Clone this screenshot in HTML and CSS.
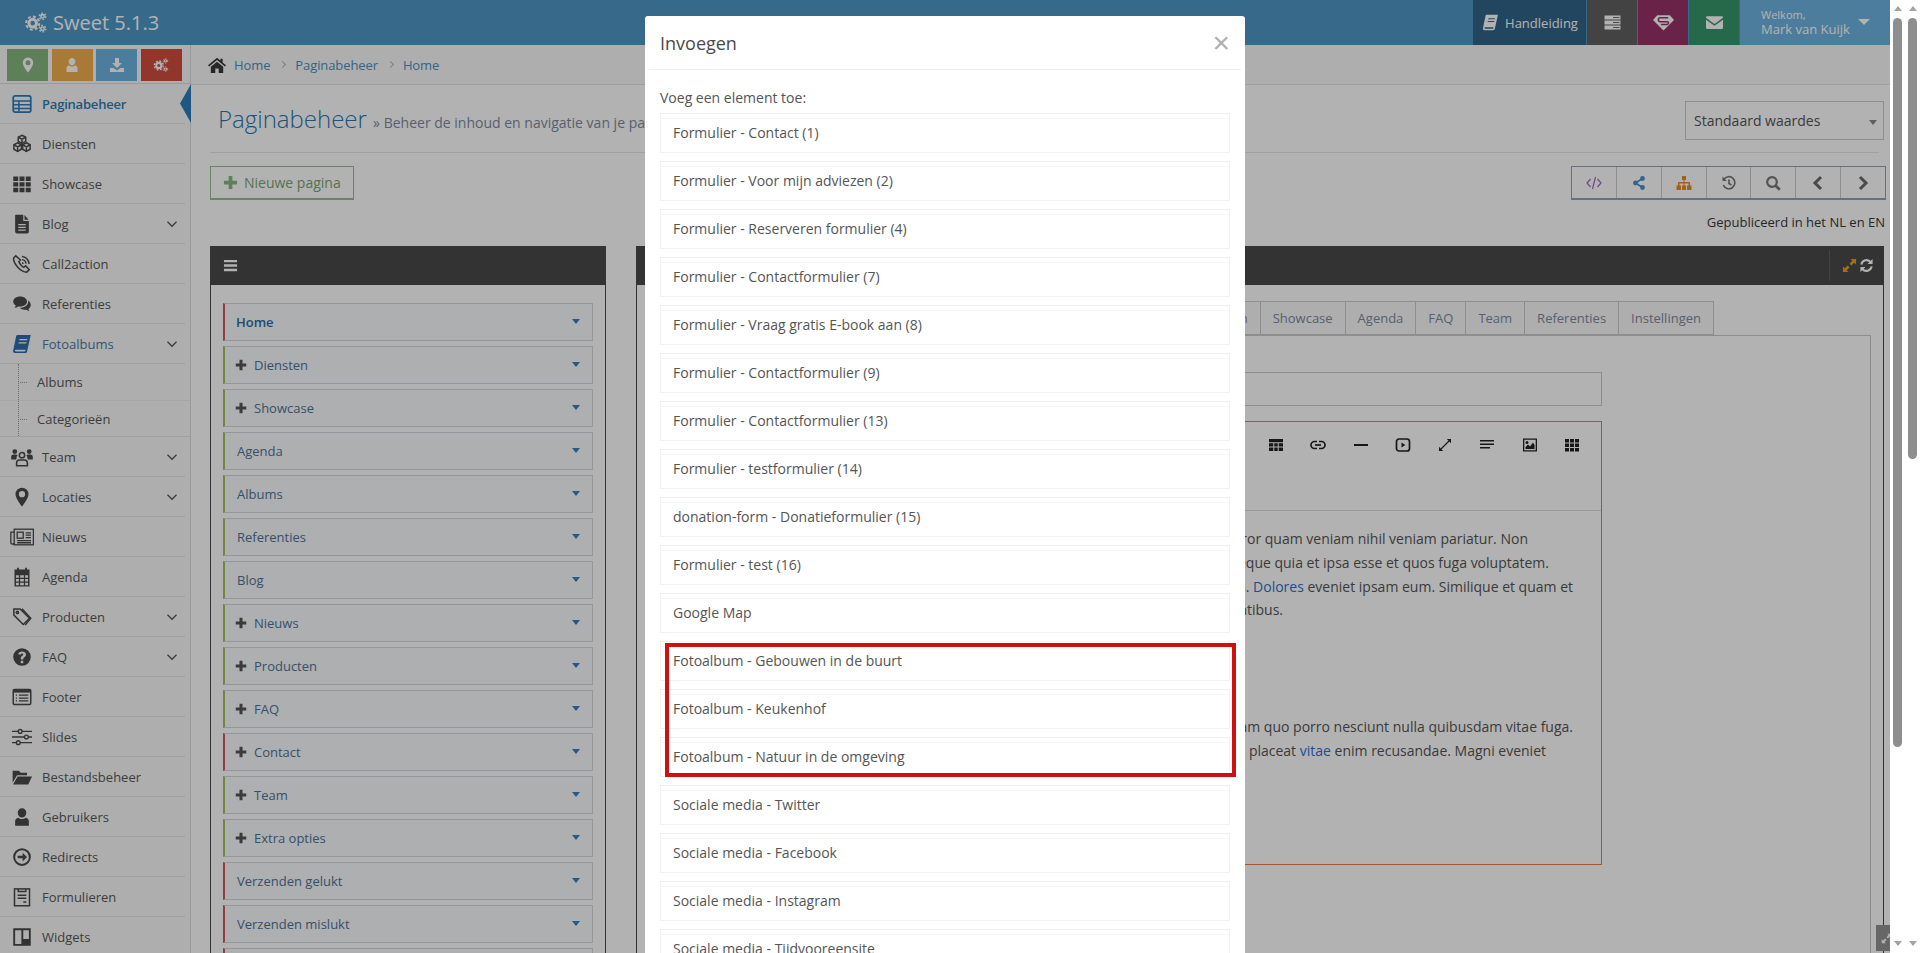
FILE: index.html
```html
<!DOCTYPE html>
<html lang="nl">
<head>
<meta charset="utf-8">
<title>Sweet 5.1.3</title>
<link rel="stylesheet" href="styles.css">
</head>
<body>
<svg class="defs" aria-hidden="true">
  <symbol id="i-gears" viewBox="0 0 18 16"><g fill="none" stroke="currentColor"><circle cx="6.500" cy="8.500" r="2.900" stroke-width="2.300"/><circle cx="6.500" cy="8.500" r="5" stroke-width="1.500" stroke-dasharray="2.200 1.730"/><circle cx="14" cy="3.300" r="1.300" stroke-width="1.200"/><circle cx="14" cy="3.300" r="2.500" stroke-width="1" stroke-dasharray="1.300 1.320"/><circle cx="14" cy="12.700" r="1.300" stroke-width="1.200"/><circle cx="14" cy="12.700" r="2.500" stroke-width="1" stroke-dasharray="1.300 1.320"/></g></symbol>
  <symbol id="i-marker" viewBox="0 0 16 16"><path fill="currentColor" fill-rule="evenodd" d="M8 .5a5.2 5.2 0 0 0-5.2 5.2C2.800 9.300 8 15.500 8 15.500s5.200-6.200 5.200-9.800A5.200 5.200 0 0 0 8 .5zm0 7.700a2.500 2.500 0 1 1 0-5 2.500 2.500 0 0 1 0 5z"/></symbol>
  <symbol id="i-user" viewBox="0 0 16 16"><path fill="currentColor" d="M8 1a3.400 3.400 0 0 1 3.400 3.800C11.300 6.700 9.900 8.400 8 8.400S4.700 6.700 4.600 4.800A3.400 3.400 0 0 1 8 1zM5 8.500c.8.700 1.900 1.100 3 1.100s2.200-.4 3-1.100c1.500.3 2.500 1.300 2.500 3V15h-11v-3.500c0-1.700 1-2.700 2.500-3z"/></symbol>
  <symbol id="i-download" viewBox="0 0 16 16"><path fill="currentColor" d="M6 1h4v5h3L8 11 3 6h3zM1 11h3.500L8 13.500 11.500 11H15v4H1z"/></symbol>
  <symbol id="i-table" viewBox="0 0 16 16"><rect x="1" y="1.500" width="14" height="13" rx="1.500" fill="none" stroke="currentColor" stroke-width="1.400"/><path stroke="currentColor" stroke-width="1.200" d="M1 5.500h14M1 8.500h14M1 11.500h14M5.500 5v9"/></symbol>
  <symbol id="i-cubes" viewBox="0 0 16 16"><g fill="none" stroke="currentColor" stroke-width="1.200"><path d="M8 1l3 1.600v3.300L8 7.500 5 5.900V2.600z"/><path d="M4.500 7L7.500 8.600v3.600L4.500 14 1.500 12.200V8.600z"/><path d="M11.500 7l3 1.600v3.600L11.500 14l-3-1.800V8.600z"/><path d="M5 2.600l3 1.600 3-1.600M1.500 8.600l3 1.700 3-1.700M8.500 8.600l3 1.700 3-1.700M8 4.200v3M4.500 10.300V14M11.500 10.300V14"/></g></symbol>
  <symbol id="i-th" viewBox="0 0 16 16"><path fill="currentColor" d="M1 2h4v3.500H1zm5 0h4v3.500H6zm5 0h4v3.500h-4zM1 6.500h4V10H1zm5 0h4V10H6zm5 0h4V10h-4zM1 11h4v3.500H1zm5 0h4v3.500H6zm5 0h4v3.500h-4z"/></symbol>
  <symbol id="i-file" viewBox="0 0 16 16"><path fill="currentColor" fill-rule="evenodd" d="M3 .5h6v5h4.500V14a1.500 1.500 0 0 1-1.500 1.500H4A1.500 1.500 0 0 1 2.500 14V1zM10 .7l3.300 3.800H10zM5 8v1h6V8zm0 2.200v1h6v-1zm0 2.200v1h6v-1z"/></symbol>
  <symbol id="i-phone" viewBox="0 0 16 16"><g fill="none" stroke="currentColor" stroke-width="1.200"><path d="M3 1.500L1.300 3.200c-.6 4 5.500 11.300 10.500 11.300l2-2-2.800-3-1.600 1.200C7.800 10 5.800 7.500 5.500 6L6.800 4.800z"/><path d="M8 2c3 .2 5.500 2.800 5.700 6M8 4.500c1.700.2 3 1.500 3.200 3.200M8 7c.5.100.8.400.9.900"/></g></symbol>
  <symbol id="i-comments" viewBox="0 0 16 16"><path fill="currentColor" d="M6.500 2C3.300 2 1 3.800 1 6c0 1.300.8 2.400 2 3.200-.2.700-.6 1.400-1 1.800 1.100-.1 2.200-.5 3-1.100.5.100 1 .1 1.500.1 3.200 0 5.500-1.800 5.500-4s-2.300-4-5.500-4zm6.300 3c.2.400.2.700.2 1 0 2.800-2.800 5-6.500 5h-.4C7 12 8.400 12.600 10 12.600c.4 0 .8 0 1.200-.1.800.6 1.800.9 2.800 1-.4-.4-.7-1-.9-1.600 1.100-.7 1.900-1.800 1.900-3 0-1.700-1-3-2.200-3.900z"/></symbol>
  <symbol id="i-book" viewBox="0 0 16 16"><path fill="currentColor" fill-rule="evenodd" d="M4.500.8H15l-.3 1.200-2.700 12.200c-.2.600-.7 1-1.300 1H2.300c-1 0-1.600-.9-1.400-1.800L3.300 1.800c.1-.6.600-1 1.200-1zM6 4l-.2 1h6.300l.2-1zm-.6 2.500l-.2 1h6.300l.2-1zM3 12.500c-.5 0-.7.300-.7.700s.3.700.7.700h7.500l.3-1.400z"/></symbol>
  <symbol id="i-team" viewBox="0 0 20 16"><path fill="currentColor" d="M4 1.500a2 2 0 1 1 0 4 2 2 0 0 1 0-4zm12 0a2 2 0 1 1 0 4 2 2 0 0 1 0-4zM1 10V7.800C1 6.800 1.900 6 3 6h2c.5 0 1 .2 1.300.5C5.700 7.200 5.400 8 5.500 9L5 10zm18 0V7.800C19 6.800 18.100 6 17 6h-2c-.5 0-1 .2-1.300.5.600.7.900 1.500.8 2.500l.5 1z"/><g fill="none" stroke="currentColor" stroke-width="1.300"><circle cx="10" cy="6.500" r="2.200"/><path d="M5.500 15.300v-2.300c0-1.500 1-2.500 2.500-2.500h4c1.500 0 2.500 1 2.500 2.500v2.300z"/></g></symbol>
  <symbol id="i-news" viewBox="0 0 20 16"><g fill="none" stroke="currentColor" stroke-width="1.100"><rect x="3.500" y="1.500" width="16" height="13"/><path d="M3.500 4H.7v9a1.500 1.500 0 0 0 2.800 0"/><rect x="6" y="4" width="5" height="5"/><path d="M13 4.500h4.500M13 6.500h4.500M13 8.500h4.500M6 11h11.500M6 12.800h11.500"/></g></symbol>
  <symbol id="i-calendar" viewBox="0 0 16 16"><path fill="currentColor" fill-rule="evenodd" d="M4 .5h1.500V2h5V.5H12V2h2v13.500H2V2h2zM3.200 6.500v2H5.500v-2zm3.300 0v2h3v-2zm4 0v2h2.300v-2zM3.200 9.500v2H5.500v-2zm3.300 0v2h3v-2zm4 0v2h2.300v-2zM3.200 12.500v2H5.500v-2zm3.300 0v2h3v-2zm4 0v2h2.300v-2z"/></symbol>
  <symbol id="i-tags" viewBox="0 0 16 16"><g fill="none" stroke="currentColor" stroke-width="1.200"><path d="M1.500 1.500h5L14 9l-5 5-7.500-7.500z"/><path d="M8 1.500l7 7.500-4.500 5.500"/><circle cx="4.300" cy="4.300" r=".9"/></g></symbol>
  <symbol id="i-question" viewBox="0 0 16 16"><path fill="currentColor" fill-rule="evenodd" d="M8 1a7 7 0 1 1 0 14A7 7 0 0 1 8 1zM7 11v2h2v-2zM8 3.500c-1.700 0-2.900.9-3 2.500h2c.1-.6.500-.9 1-.9s1 .3 1 .8c0 .4-.3.700-.8 1.100C7.300 7.600 7 8.200 7 10h2c0-1 .2-1.300 1-1.900.8-.6 1.200-1.300 1.200-2.100 0-1.500-1.400-2.500-3.200-2.500z"/></symbol>
  <symbol id="i-footer" viewBox="0 0 16 16"><rect x="1" y="2" width="14" height="12" rx="1" fill="none" stroke="currentColor" stroke-width="1.200"/><path fill="currentColor" d="M1 2h14v2.500H1z"/><path stroke="currentColor" stroke-width="1" d="M3 6.500h1M3 8.800h1M3 11h1M5.500 6.500H13M5.500 8.800H13M5.500 11H13"/></symbol>
  <symbol id="i-sliders" viewBox="0 0 16 16"><g fill="none" stroke="currentColor" stroke-width="1.100"><path d="M0 3.500h5M8 3.500h8M0 8h10M13 8h3M0 12.500h3.500M6.500 12.500H16"/><circle cx="6.500" cy="3.500" r="1.500"/><circle cx="11.500" cy="8" r="1.500"/><circle cx="5" cy="12.500" r="1.500"/></g></symbol>
  <symbol id="i-folder" viewBox="0 0 16 16"><path fill="currentColor" d="M.5 3h5l1.500 1.500h5V6.500H4L.5 12.500zM4.500 7.500H16L13 14H.8z"/></symbol>
  <symbol id="i-redirect" viewBox="0 0 16 16"><circle cx="8" cy="8" r="6.300" fill="none" stroke="currentColor" stroke-width="1.600"/><path fill="currentColor" d="M8.500 4.500L12 8l-3.500 3.500V9H4.500V7h4z"/></symbol>
  <symbol id="i-form" viewBox="0 0 16 16"><g fill="none" stroke="currentColor" stroke-width="1.200"><rect x="2" y="1.500" width="12" height="13.500"/><path d="M5 1.500v2h6v-2M4.500 6.500h7M4.500 9h7M9 12h2.500"/></g></symbol>
  <symbol id="i-widgets" viewBox="0 0 16 16"><path fill="currentColor" fill-rule="evenodd" d="M1 1h14v14H1zm1.500 1.500v11h5v-11zm6.500 0v7h4.500v-7z"/></symbol>
  <symbol id="i-home" viewBox="0 0 16 16"><path fill="currentColor" d="M8 1.500l3 2.500V2.500h2V5.700L16 8.300l-1 1.100L8 3.500 1 9.400 0 8.300zM8 5l5.500 4.500V15H9.500v-4h-3v4h-4V9.500z"/></symbol>
  <symbol id="i-plus" viewBox="0 0 16 16"><path fill="currentColor" d="M6 1h4v5h5v4h-5v5H6v-5H1V6h5z"/></symbol>
  <symbol id="i-bars" viewBox="0 0 16 16"><path fill="currentColor" d="M1 2h14v2.600H1zm0 4.700h14v2.600H1zm0 4.700h14V14H1z"/></symbol>
  <symbol id="i-chev-down" viewBox="0 0 16 16"><path fill="none" stroke="currentColor" stroke-width="1.800" d="M2 5l6 6 6-6"/></symbol>
  <symbol id="i-code" viewBox="0 0 16 16"><path fill="none" stroke="currentColor" stroke-width="1.200" d="M4.500 4L1 8l3.500 4M11.500 4L15 8l-3.500 4M9.500 2l-3 12"/></symbol>
  <symbol id="i-share" viewBox="0 0 16 16"><path fill="none" stroke="currentColor" stroke-width="1.600" d="M11.500 3.500L4.500 8l7 4.500"/><circle cx="11.500" cy="3.500" r="2.400" fill="currentColor"/><circle cx="4.500" cy="8" r="2.400" fill="currentColor"/><circle cx="11.500" cy="12.500" r="2.400" fill="currentColor"/></symbol>
  <symbol id="i-sitemap" viewBox="0 0 16 16"><path fill="currentColor" d="M6 1h4v4H8.500v2H14v3.500h1.500V15h-4.500v-4.500h1.500V8.500H8.500v2H10V15H6v-4.500h1.500V8.500h-4v2H5V15H.5v-4.500H2V7h5.500V5H6z"/></symbol>
  <symbol id="i-history" viewBox="0 0 16 16"><g fill="none" stroke="currentColor" stroke-width="1.700"><path d="M2.800 4.500A6 6 0 1 1 2.300 10"/><path d="M8 4.500V8.500l2.500 1.500"/></g><path fill="currentColor" d="M1.500 1.500L5.800 6H1.500z"/></symbol>
  <symbol id="i-search" viewBox="0 0 16 16"><circle cx="7" cy="7" r="4.800" fill="none" stroke="currentColor" stroke-width="2.200"/><path stroke="currentColor" stroke-width="2.800" d="M10.500 10.500l4.300 4.300"/></symbol>
  <symbol id="i-left" viewBox="0 0 16 16"><path fill="none" stroke="currentColor" stroke-width="3" d="M11 2L5 8l6 6"/></symbol>
  <symbol id="i-right" viewBox="0 0 16 16"><path fill="none" stroke="currentColor" stroke-width="3" d="M5 2l6 6-6 6"/></symbol>
  <symbol id="i-expand" viewBox="0 0 16 16"><path fill="currentColor" d="M15 1v6l-2-2-3 3-2-2 3-3-2-2zM1 15V9l2 2 3-3 2 2-3 3 2 2z"/></symbol>
  <symbol id="i-refresh" viewBox="0 0 16 16"><g fill="none" stroke="currentColor" stroke-width="2.200"><path d="M2.500 7a5.600 5.600 0 0 1 10-2.500"/><path d="M13.500 9a5.600 5.600 0 0 1-10 2.500"/></g><path fill="currentColor" d="M14.500 1v5.500H9zM1.500 15V9.500H7z"/></symbol>
  <symbol id="i-manual" viewBox="0 0 16 16"><path fill="currentColor" fill-rule="evenodd" d="M4.500.8H15l-.3 1.200-2.700 12.200c-.2.600-.7 1-1.300 1H2.300c-1 0-1.600-.9-1.400-1.800L3.300 1.800c.1-.6.600-1 1.200-1zM6 4l-.2 1h6.300l.2-1zm-.6 2.500l-.2 1h6.300l.2-1zM3 12.500c-.5 0-.7.300-.7.700s.3.700.7.700h7.500l.3-1.400z"/></symbol>
  <symbol id="i-server" viewBox="0 0 16 16"><path fill="currentColor" d="M.5 1.500h15v3.600H.5zm0 4.700h15v3.600H.5zm0 4.700h15v3.600H.5z"/><path stroke="#616161" stroke-width=".9" d="M8.500 3.300h6M8.500 8h6M8.500 12.700h6"/></symbol>
  <symbol id="i-diamond" viewBox="0 0 20 16"><path fill="currentColor" d="M4 1h12l4 4.500L10 15.500 0 5.500z"/><path fill="none" stroke="#973268" stroke-width="1.400" d="M14.500 3.500H7C4.500 3.500 4.500 7.200 7 7.200h6.500c1.800 0 1.600 2.200-.2 2.800H7.500"/></symbol>
  <symbol id="i-envelope" viewBox="0 0 16 16"><path fill="currentColor" d="M1 2h14a1 1 0 0 1 1 1v.6L8 9.300 0 3.600V3a1 1 0 0 1 1-1zM0 5.300L8 11l8-5.700V13a1 1 0 0 1-1 1H1a1 1 0 0 1-1-1z"/></symbol>
  <symbol id="i-link" viewBox="0 0 16 16"><g fill="none" stroke="currentColor" stroke-width="1.700"><path d="M7 4.500H4.500a3.500 3.500 0 0 0 0 7H7"/><path d="M9 4.500h2.500a3.500 3.500 0 0 1 0 7H9"/><path d="M5 8h6"/></g></symbol>
  <symbol id="i-youtube" viewBox="0 0 16 16"><rect x="1.500" y="2" width="13" height="12" rx="2.500" fill="none" stroke="currentColor" stroke-width="1.700"/><path fill="currentColor" d="M6.500 5.500l3.800 2.500-3.800 2.500z"/></symbol>
  <symbol id="i-align" viewBox="0 0 16 16"><path fill="currentColor" d="M1 3h14v1.500H1zm0 3.500h14V8H1zM1 10h10v1.500H1z"/></symbol>
  <symbol id="i-image" viewBox="0 0 16 16"><path fill="currentColor" fill-rule="evenodd" d="M1 1.500h14v13H1zm1.300 1.300v10.400h11.400V2.800zM3.500 12V10l2.500-2.500 2 2 3-4L12.500 8v4zM5 4a1.500 1.500 0 1 1 0 3 1.500 1.500 0 0 1 0-3z"/></symbol>
  <symbol id="i-tbl" viewBox="0 0 16 16"><path fill="currentColor" d="M1 2h14v3.300H1zm0 4.300h4.300v3.300H1zm5.300 0h3.400v3.300H6.300zm4.400 0H15v3.300h-4.300zM1 10.600h4.300V14H1zm5.300 0h3.400V14H6.300zm4.400 0H15V14h-4.300z"/></symbol>
  <symbol id="i-minus" viewBox="0 0 16 16"><path fill="currentColor" d="M1 7h14v2H1z"/></symbol>
  <symbol id="i-arrows" viewBox="0 0 16 16"><path fill="none" stroke="currentColor" stroke-width="1.100" d="M4 12l8-8"/><path fill="currentColor" d="M14 2v4.200L9.800 2zM2 14V9.800L6.200 14z"/></symbol>
</svg>

<div class="app">
  <header class="topbar">
    <div class="brand"><svg class="brand-ic"><use href="#i-gears"/></svg><span>Sweet 5.1.3</span></div>
    <nav class="topnav">
      <a class="nav-cell nav-manual"><svg class="nav-ic"><use href="#i-manual"/></svg><span>Handleiding</span></a>
      <a class="nav-cell nav-dark"><svg class="nav-ic"><use href="#i-server"/></svg></a>
      <a class="nav-cell nav-purple"><svg class="nav-ic nav-ic-wide"><use href="#i-diamond"/></svg></a>
      <a class="nav-cell nav-green"><svg class="nav-ic"><use href="#i-envelope"/></svg></a>
      <a class="nav-user">
        <span class="user-text"><small>Welkom,</small><span>Mark van Kuijk</span></span>
        <i class="caret-user"></i>
      </a>
    </nav>
  </header>

  <div class="layout">
    <aside class="sidebar">
      <div class="shortcuts">
        <a class="short short-green"><svg class="short-ic"><use href="#i-marker"/></svg></a>
        <a class="short short-orange"><svg class="short-ic"><use href="#i-user"/></svg></a>
        <a class="short short-blue"><svg class="short-ic"><use href="#i-download"/></svg></a>
        <a class="short short-red"><svg class="short-ic"><use href="#i-gears"/></svg></a>
      </div>
      <ul class="menu">
        <li class="mi active"><svg class="mi-ic"><use href="#i-table"/></svg><span>Paginabeheer</span></li>
        <li class="mi"><svg class="mi-ic"><use href="#i-cubes"/></svg><span>Diensten</span></li>
        <li class="mi"><svg class="mi-ic"><use href="#i-th"/></svg><span>Showcase</span></li>
        <li class="mi"><svg class="mi-ic"><use href="#i-file"/></svg><span>Blog</span><svg class="mi-chev"><use href="#i-chev-down"/></svg></li>
        <li class="mi"><svg class="mi-ic"><use href="#i-phone"/></svg><span>Call2action</span></li>
        <li class="mi"><svg class="mi-ic"><use href="#i-comments"/></svg><span>Referenties</span></li>
        <li class="mi open"><svg class="mi-ic"><use href="#i-book"/></svg><span>Fotoalbums</span><svg class="mi-chev"><use href="#i-chev-down"/></svg></li>
        <li class="sub"><ul>
          <li class="sub-item">Albums</li>
          <li class="sub-item">Categorieën</li>
        </ul></li>
        <li class="mi"><svg class="mi-ic mi-ic-wide"><use href="#i-team"/></svg><span>Team</span><svg class="mi-chev"><use href="#i-chev-down"/></svg></li>
        <li class="mi"><svg class="mi-ic"><use href="#i-marker"/></svg><span>Locaties</span><svg class="mi-chev"><use href="#i-chev-down"/></svg></li>
        <li class="mi"><svg class="mi-ic mi-ic-wide"><use href="#i-news"/></svg><span>Nieuws</span></li>
        <li class="mi"><svg class="mi-ic"><use href="#i-calendar"/></svg><span>Agenda</span></li>
        <li class="mi"><svg class="mi-ic"><use href="#i-tags"/></svg><span>Producten</span><svg class="mi-chev"><use href="#i-chev-down"/></svg></li>
        <li class="mi"><svg class="mi-ic"><use href="#i-question"/></svg><span>FAQ</span><svg class="mi-chev"><use href="#i-chev-down"/></svg></li>
        <li class="mi"><svg class="mi-ic"><use href="#i-footer"/></svg><span>Footer</span></li>
        <li class="mi"><svg class="mi-ic"><use href="#i-sliders"/></svg><span>Slides</span></li>
        <li class="mi"><svg class="mi-ic"><use href="#i-folder"/></svg><span>Bestandsbeheer</span></li>
        <li class="mi"><svg class="mi-ic"><use href="#i-user"/></svg><span>Gebruikers</span></li>
        <li class="mi"><svg class="mi-ic"><use href="#i-redirect"/></svg><span>Redirects</span></li>
        <li class="mi"><svg class="mi-ic"><use href="#i-form"/></svg><span>Formulieren</span></li>
        <li class="mi"><svg class="mi-ic"><use href="#i-widgets"/></svg><span>Widgets</span></li>
      </ul>
    </aside>

    <main class="main">
      <div class="crumbs">
        <svg class="crumb-home"><use href="#i-home"/></svg>
        <a>Home</a><i class="crumb-sep"></i><a>Paginabeheer</a><i class="crumb-sep"></i><a>Home</a>
      </div>
      <div class="content">
        <div class="page-head">
          <h1>Paginabeheer <small>» Beheer de inhoud en navigatie van je pagina's</small></h1>
          <div class="select">Standaard waardes<i class="select-caret"></i></div>
        </div>
        <div class="actions">
          <button class="btn-new"><svg class="btn-new-ic"><use href="#i-plus"/></svg>Nieuwe pagina</button>
          <div class="tools">
            <a class="tool tool-purple"><svg><use href="#i-code"/></svg></a>
            <a class="tool tool-blue"><svg><use href="#i-share"/></svg></a>
            <a class="tool tool-orange"><svg><use href="#i-sitemap"/></svg></a>
            <a class="tool"><svg><use href="#i-history"/></svg></a>
            <a class="tool"><svg><use href="#i-search"/></svg></a>
            <a class="tool tool-dark"><svg><use href="#i-left"/></svg></a>
            <a class="tool tool-dark"><svg><use href="#i-right"/></svg></a>
          </div>
        </div>
        <p class="status">Gepubliceerd in het NL en EN</p>
        <div class="panels">
          <section class="panel panel-left">
            <div class="panel-head"><svg class="bars"><use href="#i-bars"/></svg></div>
            <div class="panel-body tree">
              <div class="row red strong"><span>Home</span><i class="row-caret"></i></div>
              <div class="row green"><svg class="row-plus"><use href="#i-plus"/></svg><span>Diensten</span><i class="row-caret"></i></div>
              <div class="row green"><svg class="row-plus"><use href="#i-plus"/></svg><span>Showcase</span><i class="row-caret"></i></div>
              <div class="row green"><span>Agenda</span><i class="row-caret"></i></div>
              <div class="row green"><span>Albums</span><i class="row-caret"></i></div>
              <div class="row green"><span>Referenties</span><i class="row-caret"></i></div>
              <div class="row green"><span>Blog</span><i class="row-caret"></i></div>
              <div class="row green"><svg class="row-plus"><use href="#i-plus"/></svg><span>Nieuws</span><i class="row-caret"></i></div>
              <div class="row green"><svg class="row-plus"><use href="#i-plus"/></svg><span>Producten</span><i class="row-caret"></i></div>
              <div class="row green"><svg class="row-plus"><use href="#i-plus"/></svg><span>FAQ</span><i class="row-caret"></i></div>
              <div class="row red"><svg class="row-plus"><use href="#i-plus"/></svg><span>Contact</span><i class="row-caret"></i></div>
              <div class="row green"><svg class="row-plus"><use href="#i-plus"/></svg><span>Team</span><i class="row-caret"></i></div>
              <div class="row green"><svg class="row-plus"><use href="#i-plus"/></svg><span>Extra opties</span><i class="row-caret"></i></div>
              <div class="row red"><span>Verzenden gelukt</span><i class="row-caret"></i></div>
              <div class="row red"><span>Verzenden mislukt</span><i class="row-caret"></i></div>
              <div class="row red"></div>
            </div>
          </section>
          <section class="panel panel-right">
            <div class="panel-head head-right">
              <span class="head-sep"></span>
              <svg class="head-ic head-orange"><use href="#i-expand"/></svg>
              <svg class="head-ic"><use href="#i-refresh"/></svg>
            </div>
            <div class="panel-body editor-wrap">
              <div class="tabs">
                <a class="tab">Diensten</a><a class="tab">Showcase</a><a class="tab">Agenda</a><a class="tab">FAQ</a><a class="tab">Team</a><a class="tab">Referenties</a><a class="tab">Instellingen</a>
              </div>
              <div class="tab-body">
                <div class="input"></div>
                <div class="editor">
                  <div class="editor-tools">
                    <svg><use href="#i-tbl"/></svg>
                    <svg><use href="#i-link"/></svg>
                    <svg><use href="#i-minus"/></svg>
                    <svg><use href="#i-youtube"/></svg>
                    <svg><use href="#i-arrows"/></svg>
                    <svg><use href="#i-align"/></svg>
                    <svg><use href="#i-image"/></svg>
                    <svg><use href="#i-th"/></svg>
                  </div>
                  <div class="editor-text">
                    <p class="ln ln-a">Dolorem error quam veniam nihil veniam pariatur. Non</p>
                    <p class="ln ln-b">Eligendi neque quia et ipsa esse et quos fuga voluptatem.</p>
                    <p class="ln ln-c">Aut est quis. <a>Dolores</a> eveniet ipsam eum. Similique et quam et</p>
                    <p class="ln ln-d">voluptatibus.</p>
                    <p class="ln ln-e ln-gap">Rerum quam quo porro nesciunt nulla quibusdam vitae fuga.</p>
                    <p class="ln ln-f">Veritatis placeat <a>vitae</a> enim recusandae. Magni eveniet</p>
                  </div>
                </div>
              </div>
            </div>
          </section>
        </div>
      </div>
    </main>
  </div>

  <a class="to-top"><svg><use href="#i-expand"/></svg></a>
  <div class="backdrop"></div>

  <div class="modal">
    <div class="modal-head">
      <h2>Invoegen</h2>
      <span class="modal-close">×</span>
    </div>
    <div class="modal-body">
      <p class="modal-label">Voeg een element toe:</p>
      <a class="el">Formulier - Contact (1)</a>
      <a class="el">Formulier - Voor mijn adviezen (2)</a>
      <a class="el">Formulier - Reserveren formulier (4)</a>
      <a class="el">Formulier - Contactformulier (7)</a>
      <a class="el">Formulier - Vraag gratis E-book aan (8)</a>
      <a class="el">Formulier - Contactformulier (9)</a>
      <a class="el">Formulier - Contactformulier (13)</a>
      <a class="el">Formulier - testformulier (14)</a>
      <a class="el">donation-form - Donatieformulier (15)</a>
      <a class="el">Formulier - test (16)</a>
      <a class="el">Google Map</a>
      <a class="el">Fotoalbum - Gebouwen in de buurt</a>
      <a class="el">Fotoalbum - Keukenhof</a>
      <a class="el">Fotoalbum - Natuur in de omgeving</a>
      <a class="el">Sociale media - Twitter</a>
      <a class="el">Sociale media - Facebook</a>
      <a class="el">Sociale media - Instagram</a>
      <a class="el">Sociale media - Tijdvooreensite</a>
    </div>
    <div class="highlight"></div>
  </div>
</div>

<div class="scrolls">
  <div class="track"><i class="arrow-up"></i><i class="thumb thumb-long"></i><i class="arrow-down"></i></div>
  <div class="track"><i class="arrow-up"></i><i class="thumb thumb-short"></i><i class="arrow-down"></i></div>
</div>
</body>
</html>
```

FILE: styles.css
```css
* { box-sizing: border-box; }
html, body { margin: 0; height: 953px; overflow: hidden; }
body { display: flex; background: #fff; font-family: "Open Sans", "Liberation Sans", sans-serif; font-size: 13px; color: #393939; }
ul { list-style: none; margin: 0; padding: 0; }
p, h1, h2 { margin: 0; font-weight: 400; }
a { color: inherit; text-decoration: none; }
svg { display: block; }
.defs { position: absolute; width: 0; height: 0; }

.app { position: relative; width: 1890px; height: 953px; overflow: hidden; flex: none; background: #fff; }

/* top bar */
.topbar { display: flex; justify-content: space-between; height: 45px; background: #4f99c6; color: #fff; }
.brand { display: flex; align-items: center; padding-left: 24px; gap: 5px; font-size: 20px; }
.brand-ic { width: 24px; height: 21px; }
.topnav { display: flex; }
.nav-cell { display: flex; align-items: center; justify-content: center; width: 50px; margin-right: 1px; border-left: 1px solid transparent; }
.nav-manual { width: 113px; gap: 6px; padding: 0 9px; background: #33658a; font-size: 13px; }
.nav-dark { background: #616161; }
.nav-purple { background: #973268; }
.nav-green { background: #36976b; }
.nav-ic { width: 17px; height: 17px; flex: none; color: #fff; }
.nav-ic-wide { width: 21px; height: 17px; }
.nav-user { display: flex; align-items: center; width: 150px; padding: 0 0 2px 21px; background: #6fb3e0; }
.user-text { display: flex; flex-direction: column; line-height: 15px; font-size: 13px; }
.user-text small { font-size: 11px; }
.caret-user { margin-left: 8px; border: 6px solid transparent; border-top: 6px solid #fff; border-bottom: 0; }

/* layout */
.layout { display: flex; height: 908px; }
.sidebar { width: 191px; flex: none; border-right: 1px solid #ddd; background: #f9f9f9; position: relative; }
.shortcuts { display: flex; height: 39px; padding: 4px 0 0 7px; gap: 3.600px; border-bottom: 1px solid #ddd; }
.short { display: flex; align-items: center; justify-content: center; width: 41px; height: 32px; color: #fff; }
.short-green { background: #87b87f; }
.short-orange { background: #f2ae50; }
.short-blue { background: #6fb3e0; }
.short-red { background: #d24e3f; }
.short-ic { width: 16px; height: 16px; }
.mi { position: relative; display: flex; align-items: center; height: 40px; padding-left: 42px; border-bottom: 1px solid #e5e5e5; color: #585858; margin-right: 5px; }
.mi-ic { position: absolute; left: 12px; top: 10px; width: 20px; height: 20px; color: #4a4a4a; }
.mi-ic-wide { left: 10px; width: 24px; }
.mi-chev { position: absolute; right: 7px; top: 14px; width: 12px; height: 12px; color: #585858; }
.active { color: #2b7dbc; font-weight: 600; letter-spacing: -.2px; }
.active .mi-ic { color: #2b7dbc; }
.active::after { content: ""; position: absolute; right: -6px; top: 0; width: 11px; height: 39px; background: #2b7dbc; clip-path: polygon(0 50%, 100% 0, 100% 100%); }
.open { color: #4c7ba5; }
.open .mi-ic { color: #2b6cb0; }
.sub { position: relative; border-bottom: 1px solid #e5e5e5; }
.sub::before { content: ""; position: absolute; left: 18px; top: 0; bottom: 0; border-left: 1px dotted #9c9c9c; }
.sub-item { position: relative; display: flex; align-items: center; height: 35px; padding-left: 37px; color: #585858; border-bottom: 1px solid #eee; }
.sub-item:first-child { height: 37px; }
.sub-item:last-child { border-bottom: 0; }
.sub-item::before { content: ""; position: absolute; left: 20px; top: 50%; width: 7px; border-top: 1px dotted #9c9c9c; }

/* main */
.main { flex: 1; min-width: 0; }
.crumbs { display: flex; align-items: center; height: 40px; padding-left: 17px; border-bottom: 1px solid #e5e5e5; color: #4c8fbd; background: #fafafa; letter-spacing: -.1px; }
.crumb-home { width: 18px; height: 18px; color: #393939; margin-right: 8px; }
.crumb-sep { width: 5px; height: 5px; border-top: 1px solid #b2b6bf; border-right: 1px solid #b2b6bf; transform: rotate(45deg); margin: 0 10px; }
.content { padding: 0 6px 0 19px; }
.page-head { display: flex; justify-content: space-between; align-items: center; height: 68px; padding-left: 8px; border-bottom: 1px solid #e5e5e5; margin-right: 5px; }
.page-head h1 { font-size: 24px; font-weight: 300; color: #2679b5; white-space: nowrap; }
.page-head small { font-size: 14px; font-weight: 400; color: #8089a0; }
.select { position: relative; display: flex; align-items: center; width: 199px; height: 39px; margin: 3px -5px 0 0; padding-left: 8px; border: 1px solid #ccc; background: #fff; color: #555; font-size: 14px; }
.select-caret { position: absolute; right: 6px; top: 18px; border: 4px solid transparent; border-top: 5px solid #888; border-bottom: 0; }
.actions { display: flex; justify-content: space-between; margin-top: 13px; height: 34px; margin-right: -2px; }
.btn-new { display: flex; align-items: center; gap: 6px; width: 144px; height: 34px; padding: 0 0 0 12px; border: 1px solid #9abc92; border-bottom-width: 2px; background: #fff; color: #7ba473; font: 14px "Open Sans", sans-serif; }
.btn-new-ic { width: 15px; height: 15px; color: #87b87f; }
.tools { display: flex; width: 315px; border: 1px solid #8aa5bb; border-bottom-width: 2px; background: #fff; }
.tool { display: flex; flex: 1; align-items: center; justify-content: center; border-right: 1px solid #ccc; color: #777; }
.tool:last-child { border-right: 0; }
.tool svg { width: 16px; height: 16px; }
.tool-purple { color: #a069c3; }
.tool-blue { color: #478fca; }
.tool-orange { color: #e8892b; }
.tool-dark { color: #6a6a6a; }
.status { height: 20px; margin: 12px -1px 0 0; text-align: right; line-height: 20px; color: #393939; }

.panels { display: flex; gap: 30px; margin-top: 14px; }
.panel-left { width: 396px; flex: none; }
.panel-right { flex: 1; min-width: 0; }
.panel-head { display: flex; align-items: center; height: 39px; background: #494949; color: #fff; padding-left: 13px; }
.bars { width: 15px; height: 15px; }
.head-right { justify-content: flex-end; padding-right: 10px; gap: 2px; }
.head-sep { height: 31px; border-left: 1px solid #5f5f5f; margin-right: 10px; }
.head-ic { width: 15px; height: 15px; }
.head-orange { color: #f39c12; }
.panel-body { border: 1px solid #494949; border-top: 0; border-bottom: 0; height: 800px; }
.tree { padding: 18px 12px 0; }
.row { display: flex; align-items: center; height: 38px; margin-bottom: 5px; padding-left: 12px; border: 1px solid #d5d9dc; border-left: 2px solid; background: #f9fbfc; color: #4f7397; position: relative; }
.row.red { border-left-color: #cf5a55; }
.row.green { border-left-color: #a5c15a; }
.row.strong { padding-left: 11px; font-weight: 600; color: #2b6ca8; }
.row-plus { width: 12px; height: 12px; color: #555; margin: 0 7px 0 -2px; flex: none; }
.row-caret { position: absolute; right: 12px; top: 15px; border: 4.500px solid transparent; border-top: 5px solid #3b7eb8; border-bottom: 0; }

.editor-wrap { padding: 16px 12px 0 14px; }
.tabs { display: flex; justify-content: flex-end; height: 34px; padding-right: 157px; }
.tab { display: flex; align-items: center; padding: 0 12px; border: 1px solid #ccc; border-left: 0; color: #8089a0; white-space: nowrap; background: #f9f9f9; }
.tab-body { border: 1px solid #ccc; border-bottom: 0; height: 780px; padding: 36px 268px 0 30px; }
.input { height: 34px; border: 1px solid #ccc; }
.editor { height: 444px; margin-top: 15px; border: 1px solid #e5824a; }
.editor-tools { display: flex; justify-content: flex-end; gap: 26.300px; height: 89px; padding: 15px 21px 0 0; border-bottom: 1px solid #ddd; color: #222; }
.editor-tools svg { width: 16px; height: 16px; }
.editor-text { padding: 16px 1px 0 0; color: #555; font-size: 14px; line-height: 23.800px; }
.editor-text a { color: #2e6fd0; }
.ln { text-align: right; white-space: nowrap; }
.ln-a { padding-right: 72px; }
.ln-b { padding-right: 51px; }
.ln-c { padding-right: 27px; }
.ln-d { padding-right: 317px; }
.ln-e { padding-right: 27px; }
.ln-f { padding-right: 54px; }
.ln-gap { margin-top: 93px; }

.to-top { position: absolute; left: 1876px; top: 925px; width: 36px; height: 26px; background: #939393; color: #fff; padding: 8px 0 0 5px; }
.to-top svg { width: 11px; height: 11px; }

/* modal */
.backdrop { position: absolute; inset: 0; background: rgba(0, 0, 0, .3); }
.modal { position: absolute; left: 645px; top: 16px; width: 600px; height: 1040px; background: #fff; border-radius: 3px 3px 0 0; }
.modal-head { display: flex; justify-content: space-between; align-items: center; height: 54px; margin: 0 4px; padding: 0 11px; border-bottom: 1px solid #eee; }
.modal-head h2 { font-size: 18px; color: #4a4a4a; }
.modal-close { font-size: 30px; line-height: 1; color: #b0b0b0; font-family: "Liberation Sans", sans-serif; }
.modal-body { padding: 19px 15px 0; }
.modal-label { height: 18px; line-height: 18px; margin-bottom: 6px; font-size: 14px; color: #555; }
.el { display: flex; align-items: center; height: 40px; margin-bottom: 8px; padding: 0 0 1px 12px; border: 1px solid #f1f1f1; font-size: 14px; color: #555; box-shadow: inset 0 4px 0 #fff, inset 0 5px 0 #f8f8f8; }
.highlight { position: absolute; left: 20px; top: 627px; width: 571px; height: 134px; border: 4px solid #d01010; }

/* scrollbars */
.scrolls { display: flex; flex: none; width: 30px; height: 953px; background: #fff; }
.track { display: flex; flex-direction: column; align-items: center; width: 15px; padding: 6px 0; }
.arrow-up { flex: none; border: 4px solid transparent; border-top: 0; border-bottom: 5px solid #a3a3a3; }
.arrow-down { flex: none; margin-top: auto; border: 4px solid transparent; border-bottom: 0; border-top: 5px solid #a3a3a3; margin-bottom: 1px; }
.thumb { flex: none; width: 9px; margin-top: 7px; border-radius: 5px; background: #8e8e8e; }
.thumb-long { height: 729px; }
.thumb-short { height: 441px; }
```
